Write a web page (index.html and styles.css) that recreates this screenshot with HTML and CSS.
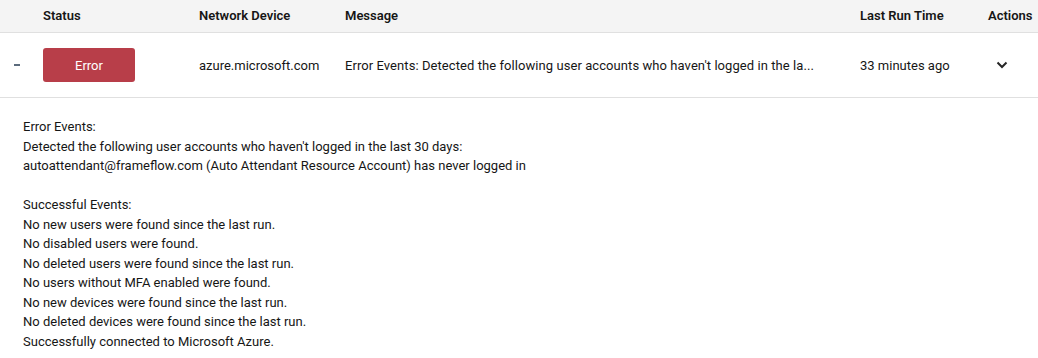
FILE: index.html
```html
<!DOCTYPE html>
<html>
<head>
<meta charset="utf-8">
<link rel="stylesheet" href="styles.css">
</head>
<body>
<div class="table">
  <div class="row head">
    <div class="cell"></div>
    <div class="cell">Status</div>
    <div class="cell">Network Device</div>
    <div class="cell">Message</div>
    <div class="cell">Last Run Time</div>
    <div class="cell">Actions</div>
  </div>
  <div class="row body">
    <div class="cell expand"><span class="dash"></span></div>
    <div class="cell"><span class="badge">Error</span></div>
    <div class="cell">azure.microsoft.com</div>
    <div class="cell msg">Error Events: Detected the following user accounts who haven't logged in the la...</div>
    <div class="cell">33 minutes ago</div>
    <div class="cell action">
      <svg width="12" height="8" viewBox="0 0 12 8"><path d="M1.5 1.5 L6 6 L10.5 1.5" fill="none" stroke="#262626" stroke-width="2"/></svg>
    </div>
  </div>
  <div class="detail">
    <div>Error Events:</div>
    <div>Detected the following user accounts who haven't logged in the last 30 days:</div>
    <div>autoattendant@frameflow.com (Auto Attendant Resource Account) has never logged in</div>
    <div class="blank">&nbsp;</div>
    <div>Successful Events:</div>
    <div>No new users were found since the last run.</div>
    <div>No disabled users were found.</div>
    <div>No deleted users were found since the last run.</div>
    <div>No users without MFA enabled were found.</div>
    <div>No new devices were found since the last run.</div>
    <div>No deleted devices were found since the last run.</div>
    <div>Successfully connected to Microsoft Azure.</div>
  </div>
</div>
</body>
</html>
```

FILE: styles.css
```css
html, body {
  margin: 0;
  padding: 0;
  background: #ffffff;
}
body {
  font-family: Roboto, "Liberation Sans", sans-serif;
  font-size: 13px;
  color: #161616;
}
.row {
  display: grid;
  grid-template-columns: 35px 156px 146px 515px 128px 1fr;
  align-items: center;
  border-bottom: 1px solid #e0e0e0;
}
.head {
  height: 32px;
  background: #f4f4f4;
  font-weight: 600;
  line-height: 30px;
}
.body {
  height: 64px;
}
.cell {
  padding: 0 8px;
  white-space: nowrap;
  overflow: hidden;
}
.msg {
  letter-spacing: 0.07px;
}
.expand {
  padding: 0 0 0 14px;
  display: flex;
  align-items: center;
}
.dash {
  display: block;
  width: 6px;
  height: 2px;
  background: #5b6b7c;
}
.badge {
  display: flex;
  align-items: center;
  justify-content: center;
  width: 92px;
  height: 34px;
  border-radius: 3px;
  background: #b83e49;
  color: #ffffff;
}
.action {
  display: flex;
  align-items: center;
  padding-left: 16px;
}
.detail {
  padding: 19px 23px 0;
  line-height: 19.5px;
}
```
